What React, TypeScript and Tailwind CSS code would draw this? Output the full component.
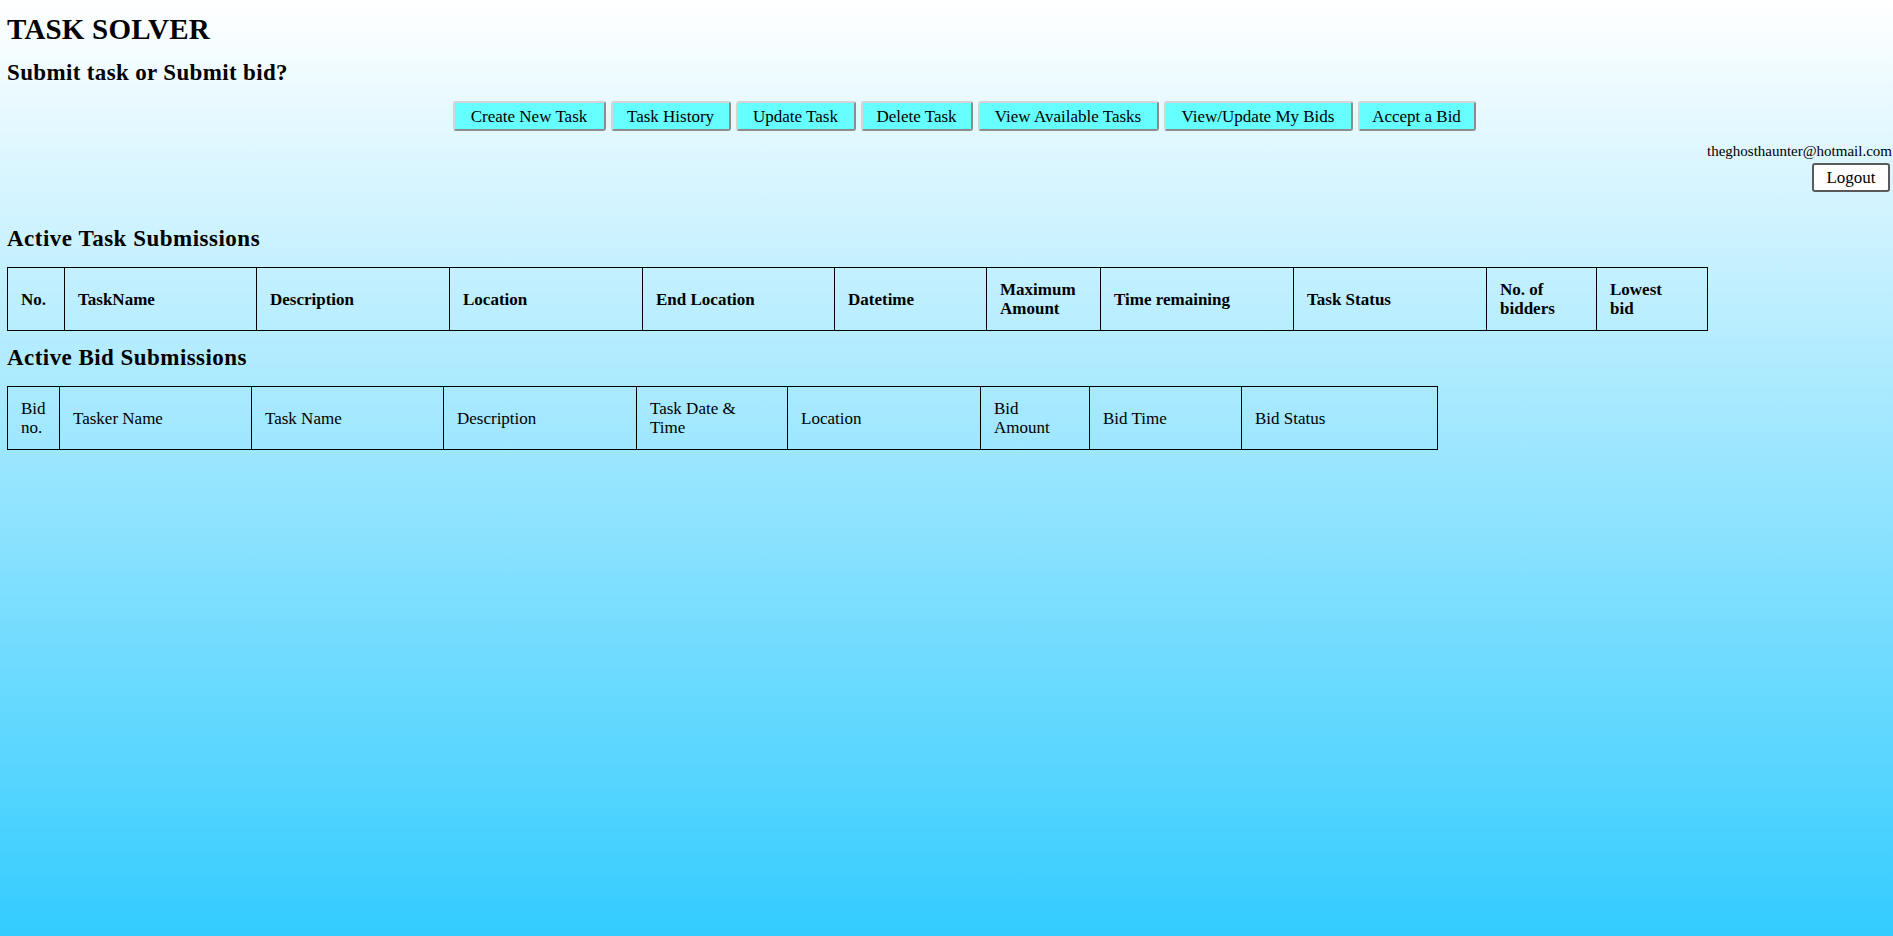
import React from 'react';

// ナビゲーションボタン（幅は参照画像に合わせて固定）
const navButtons = [
  { label: 'Create New Task', width: 'w-[153px]' },
  { label: 'Task History', width: 'w-[120px]' },
  { label: 'Update Task', width: 'w-[120px]' },
  { label: 'Delete Task', width: 'w-[112px]' },
  { label: 'View Available Tasks', width: 'w-[181px]' },
  { label: 'View/Update My Bids', width: 'w-[189px]' },
  { label: 'Accept a Bid', width: 'w-[118px]' },
];

const taskColumns: { label: React.ReactNode; width: string }[] = [
  { label: 'No.', width: 'w-[57px]' },
  { label: 'TaskName', width: 'w-[192px]' },
  { label: 'Description', width: 'w-[193px]' },
  { label: 'Location', width: 'w-[193px]' },
  { label: 'End Location', width: 'w-[192px]' },
  { label: 'Datetime', width: 'w-[152px]' },
  { label: <>Maximum<br />Amount</>, width: 'w-[114px]' },
  { label: 'Time remaining', width: 'w-[193px]' },
  { label: 'Task Status', width: 'w-[193px]' },
  { label: <>No. of<br />bidders</>, width: 'w-[110px]' },
  { label: <>Lowest<br />bid</>, width: 'w-[111px]' },
];

const bidColumns: { label: React.ReactNode; width: string }[] = [
  { label: <>Bid<br />no.</>, width: 'w-[52px]' },
  { label: 'Tasker Name', width: 'w-[192px]' },
  { label: 'Task Name', width: 'w-[192px]' },
  { label: 'Description', width: 'w-[193px]' },
  { label: <>Task Date &amp;<br />Time</>, width: 'w-[151px]' },
  { label: 'Location', width: 'w-[193px]' },
  { label: <>Bid<br />Amount</>, width: 'w-[109px]' },
  { label: 'Bid Time', width: 'w-[152px]' },
  { label: 'Bid Status', width: 'w-[196px]' },
];

function NavButton({ label, width }: { label: string; width: string }) {
  return (
    <button
      className={`${width} h-[30px] rounded-[3px] border-2 border-t-[#d4d4d4] border-l-[#d4d4d4] border-r-[#8c8c8c] border-b-[#8c8c8c] bg-[#66ffff] text-[17px] leading-none text-black`}
    >
      {label}
    </button>
  );
}

export default function App() {
  return (
    <div className="min-h-screen w-full bg-[linear-gradient(to_bottom,#ffffff,#33ccff)] font-['Liberation_Serif','Times_New_Roman',serif] text-black">
      <div className="pl-[7px]">
        <h1 className="pt-[11px] text-[29px] font-bold leading-[36px] tracking-[0.2px]">TASK SOLVER</h1>
        <h3 className="mt-[12px] text-[23px] font-bold leading-[28px] tracking-[0.35px]">Submit task or Submit bid?</h3>
      </div>

      {/* メニュー */}
      <div className="mt-[14px] flex justify-center gap-[5px] pl-[35px]">
        {navButtons.map((b) => (
          <NavButton key={b.label} label={b.label} width={b.width} />
        ))}
      </div>

      {/* ログイン情報 */}
      <div className="mt-[11px] flex flex-col items-end pr-[1px]">
        <div className="text-[15px] leading-[18px]">theghosthaunter@hotmail.com</div>
        <button className="mt-[3px] mr-[2px] h-[29px] w-[78px] rounded-[3px] border-2 border-[#5a5a5a] bg-white text-[17px] leading-none">
          Logout
        </button>
      </div>

      <div className="pl-[7px]">
        <h3 className="mt-[33px] text-[23px] font-bold leading-[28px] tracking-[0.5px]">Active Task Submissions</h3>
        <table className="mt-[14px] w-[1700px] table-fixed border-collapse">
          <thead>
            <tr>
              {taskColumns.map((c, i) => (
                <th
                  key={i}
                  className={`${c.width} h-[63px] border border-black py-[12px] pl-[13px] pr-[6px] text-left align-middle text-[17px] font-bold leading-[19px]`}
                >
                  {c.label}
                </th>
              ))}
            </tr>
          </thead>
          <tbody></tbody>
        </table>

        <h3 className="mt-[13px] text-[23px] font-bold leading-[28px] tracking-[0.45px]">Active Bid Submissions</h3>
        <table className="mt-[14px] w-[1430px] table-fixed border-collapse">
          <tbody>
            <tr>
              {bidColumns.map((c, i) => (
                <td
                  key={i}
                  className={`${c.width} h-[62px] border border-black py-[12px] pl-[13px] pr-[6px] text-left align-middle text-[17px] leading-[19px]`}
                >
                  {c.label}
                </td>
              ))}
            </tr>
          </tbody>
        </table>
      </div>
    </div>
  );
}
